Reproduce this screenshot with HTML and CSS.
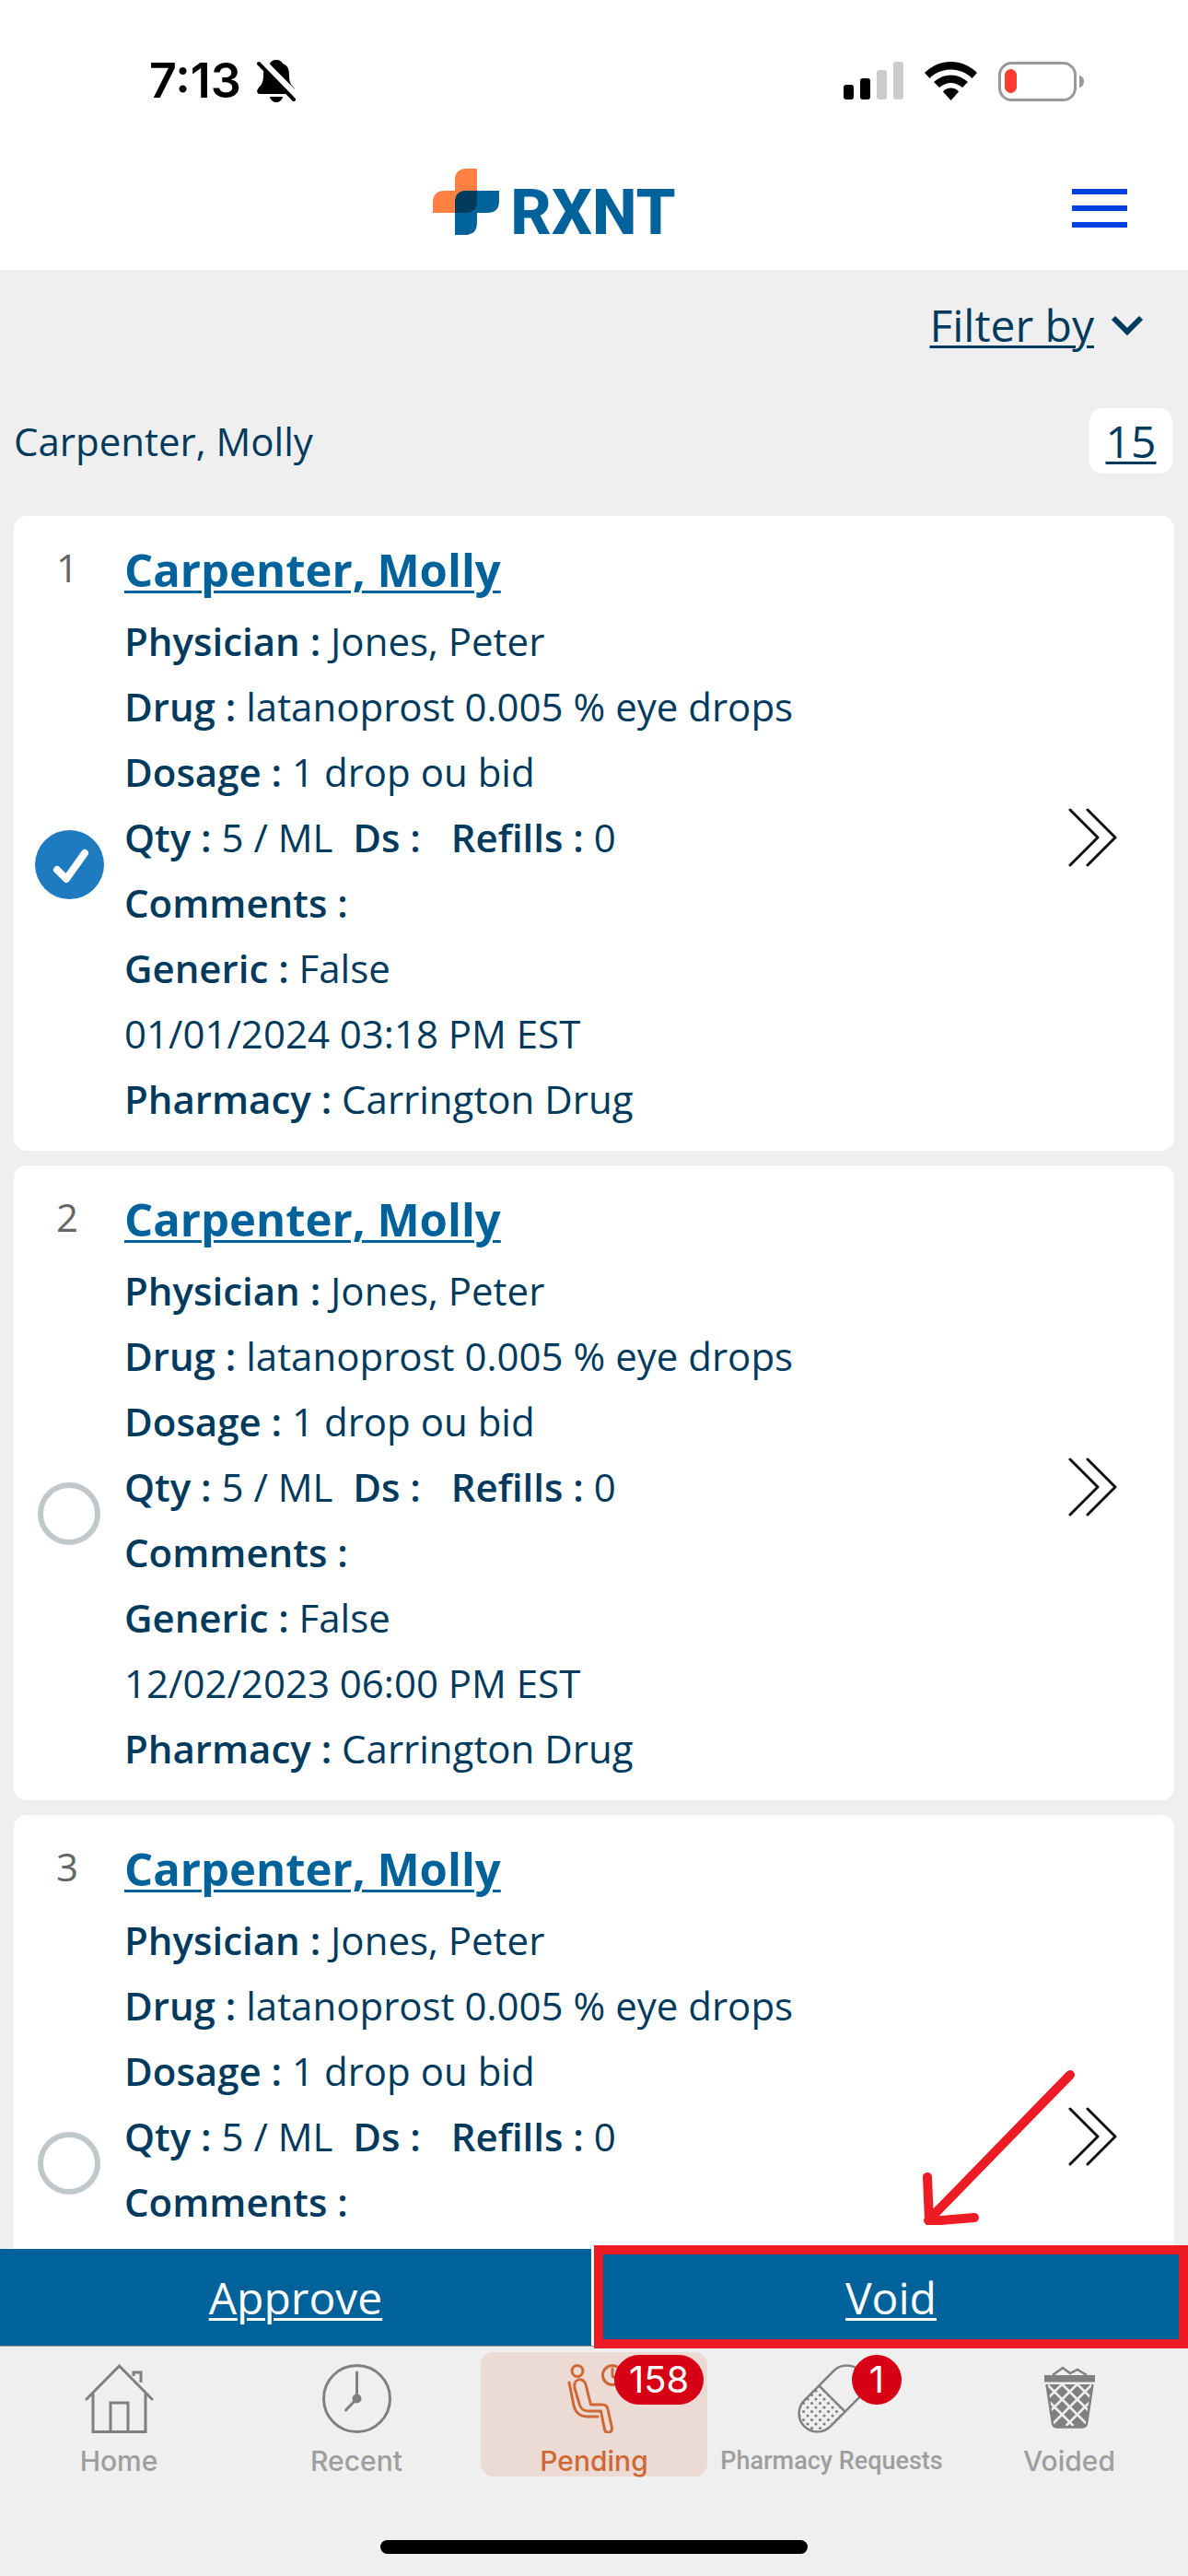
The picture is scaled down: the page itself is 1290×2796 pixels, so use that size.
FILE: index.html
```html
<!DOCTYPE html>
<html lang="en">
<head>
<meta charset="utf-8">
<meta name="viewport" content="width=device-width, initial-scale=1">
<title>RXNT – Pending prescriptions</title>
<link rel="stylesheet" href="styles.css">
</head>
<body>
<svg class="sprite" aria-hidden="true">
  <symbol id="chevrons" viewBox="0 0 53 64">
    <path d="M2 2 32 32 2 62M21 2 51 32 21 62" fill="none" stroke="#111" stroke-width="3" stroke-linecap="round" stroke-linejoin="round"/>
  </symbol>
</svg>

<div class="status">
  <div class="status-left">
    <span class="time">7:13</span>
    <svg class="bell" width="42" height="46" viewBox="0 0 42 46">
      <path d="M21 0C17 0 15 2 14 4C8 6 7 12 7 17C7 24 5 27 2 30C-1 34 0 37 3 37H39C42 37 42 33 40 30C36 26 35 23 35 17C35 11 34 6 28 4C27 2 25 0 21 0Z"/>
      <path d="M14 40H28C27 44 24 46 21 46S15 44 14 40Z"/>
      <path d="M4 1 44 41" stroke="#fff" stroke-width="9"/>
      <path d="M2 4 40 43" stroke="#000" stroke-width="4" stroke-linecap="round"/>
    </svg>
  </div>
  <div class="status-right">
    <svg width="65" height="42" viewBox="0 0 65 42">
      <rect y="25" width="11" height="16" rx="3"/>
      <rect x="18" y="18" width="11" height="23" rx="3"/>
      <rect x="36" y="9" width="11" height="32" rx="3" fill="#ccc"/>
      <rect x="54" width="11" height="41" rx="3" fill="#ccc"/>
    </svg>
    <svg width="57" height="42" viewBox="0 0 57 42">
      <path d="M28.500 0C17.500 0 7.500 4.500 0 12L5.500 18C11.500 12 19.500 8.500 28.500 8.500S45.500 12 51.500 18L57 12C49.500 4.500 39.500 0 28.500 0Z"/>
      <path d="M28.500 14.500C21.500 14.500 15 17.500 10 22L16 28C19.500 25 24 23 28.500 23S37.500 25 41 28L47 22C42 17.500 35.500 14.500 28.500 14.500Z"/>
      <path d="M28.500 28.500C25 28.500 22 30 20 32.500L28.500 42 37 32.500C35 30 32 28.500 28.500 28.500Z"/>
    </svg>
    <svg width="93" height="43" viewBox="0 0 93 43">
      <rect x="1.500" y="1.500" width="82" height="40" rx="13" fill="none" stroke="#999" stroke-width="3"/>
      <rect x="7" y="8" width="13" height="26" rx="6.500" fill="#ff3b30"/>
      <path d="M88 15C92 16 93 19 93 21.500S92 27 88 28Z" fill="#999"/>
    </svg>
  </div>
</div>

<header class="header">
  <a class="logo" href="#">
    <svg width="72" height="72" viewBox="0 0 72 72">
      <path d="M48 0V48H0V37Q0 24 13 24H24V12Q24 0 37 0Z" fill="#ff8042"/>
      <path d="M24 72V37Q24 24 37 24H72V35Q72 48 59 48H48V59Q48 72 35 72Z" fill="#00629b"/>
      <path d="M24 48V37Q24 24 37 24H48V35Q48 48 35 48Z" fill="#003a5d"/>
    </svg>
    <span>RXNT</span>
  </a>
  <button class="menu" aria-label="Menu"><i></i><i></i><i></i></button>
</header>

<main class="content">
  <div class="filter">
    <a href="#">Filter by</a>
    <svg width="36" height="22" viewBox="0 0 36 22"><path d="M3 3 18 18 33 3" fill="none" stroke="#003a5d" stroke-width="6"/></svg>
  </div>
  <div class="summary">
    <span>Carpenter, Molly</span>
    <a class="count" href="#">15</a>
  </div>

  <article class="card">
    <div class="pick"><span>1</span><input type="checkbox" aria-label="Select prescription 1" checked></div>
    <div class="details">
      <h2><a href="#">Carpenter, Molly</a></h2>
      <p><b>Physician :</b> Jones, Peter</p>
      <p><b>Drug :</b> latanoprost 0.005 % eye drops</p>
      <p><b>Dosage :</b> 1 drop ou bid</p>
      <p><b>Qty :</b> 5 / ML&nbsp; <b>Ds :</b> &nbsp; <b>Refills :</b> 0</p>
      <p><b>Comments :</b></p>
      <p><b>Generic :</b> False</p>
      <p>01/01/2024 03:18 PM EST</p>
      <p><b>Pharmacy :</b> Carrington Drug</p>
    </div>
    <a class="open" href="#" aria-label="Open prescription 1"><svg width="53" height="64"><use href="#chevrons"/></svg></a>
  </article>

  <article class="card">
    <div class="pick"><span>2</span><input type="checkbox" aria-label="Select prescription 2"></div>
    <div class="details">
      <h2><a href="#">Carpenter, Molly</a></h2>
      <p><b>Physician :</b> Jones, Peter</p>
      <p><b>Drug :</b> latanoprost 0.005 % eye drops</p>
      <p><b>Dosage :</b> 1 drop ou bid</p>
      <p><b>Qty :</b> 5 / ML&nbsp; <b>Ds :</b> &nbsp; <b>Refills :</b> 0</p>
      <p><b>Comments :</b></p>
      <p><b>Generic :</b> False</p>
      <p>12/02/2023 06:00 PM EST</p>
      <p><b>Pharmacy :</b> Carrington Drug</p>
    </div>
    <a class="open" href="#" aria-label="Open prescription 2"><svg width="53" height="64"><use href="#chevrons"/></svg></a>
  </article>

  <article class="card">
    <div class="pick"><span>3</span><input type="checkbox" aria-label="Select prescription 3"></div>
    <div class="details">
      <h2><a href="#">Carpenter, Molly</a></h2>
      <p><b>Physician :</b> Jones, Peter</p>
      <p><b>Drug :</b> latanoprost 0.005 % eye drops</p>
      <p><b>Dosage :</b> 1 drop ou bid</p>
      <p><b>Qty :</b> 5 / ML&nbsp; <b>Ds :</b> &nbsp; <b>Refills :</b> 0</p>
      <p><b>Comments :</b></p>
    </div>
    <a class="open" href="#" aria-label="Open prescription 3"><svg width="53" height="64"><use href="#chevrons"/></svg></a>
  </article>
</main>

<div class="actions">
  <button class="approve">Approve</button>
  <div class="void">
    <button>Void</button>
    <div class="callout"></div>
    <svg class="arrow" width="175" height="175" viewBox="0 0 175 175">
      <path d="M167 12 13 170M12 123 14 171 63 167" fill="none" stroke="#ed1c24" stroke-width="10" stroke-linecap="round" stroke-linejoin="round"/>
    </svg>
  </div>
</div>

<nav class="tabs">
  <a class="tab" href="#">
    <svg width="75" height="75" viewBox="0 0 75 75" fill="none" stroke="#808080" stroke-width="3">
      <path d="M1 39 37.500 2 74 39M9 32V73.500H66V32M28 73V42H47V73M53 13V9H61V20"/>
    </svg>
    <span>Home</span>
  </a>
  <a class="tab" href="#">
    <svg width="75" height="75" viewBox="0 0 75 75" fill="none" stroke="#808080" stroke-width="3" stroke-linecap="round">
      <circle cx="37.500" cy="37.500" r="36"/><path d="M37.500 9V37.500L25.500 50"/><circle cx="37.500" cy="37.500" r="3.500" fill="#808080"/>
    </svg>
    <span>Recent</span>
  </a>
  <a class="tab active" href="#" aria-current="page">
    <svg width="75" height="75" viewBox="0 0 75 75" fill="none" stroke="#cf6835" stroke-width="3" stroke-linecap="round" stroke-linejoin="round">
      <circle cx="19" cy="7.500" r="6"/>
      <circle cx="57" cy="12" r="10.500"/><path d="M57 5V13L61 16"/>
      <path d="M10 20 15 45Q18 57 30 57H41"/>
      <path d="M16 26C14 15 26 14 28 22L33.500 44H46Q51 44 52 49L56.500 69C57 75 50 76 48.500 71L44.500 51H31Q23 51 21 43Z"/>
    </svg>
    <span>Pending</span>
    <em class="badge">158</em>
  </a>
  <a class="tab" href="#">
    <svg width="75" height="75" viewBox="0 0 75 75">
      <defs><pattern id="dots" width="9" height="9" patternUnits="userSpaceOnUse"><circle cx="2" cy="2" r="1.600" fill="#808080"/><circle cx="6.500" cy="6.500" r="1.600" fill="#808080"/></pattern></defs>
      <path d="M23 23 51 51 35 67A19.500 19.500 0 0 1 7 39Z" fill="url(#dots)"/>
      <g transform="rotate(-45 37.500 37.500)" fill="none" stroke="#808080" stroke-width="2.500">
        <rect x="-5" y="17.500" width="85" height="40" rx="20"/><path d="M37.500 17.500V57.500"/>
      </g>
    </svg>
    <span class="long">Pharmacy Requests</span>
    <em class="badge">1</em>
  </a>
  <a class="tab" href="#">
    <svg width="75" height="75" viewBox="0 0 75 75">
      <path d="M19 12 30 4 38 10 46 6 56 12" fill="none" stroke="#808080" stroke-width="2.500"/>
      <rect x="10" y="12" width="55" height="7.500" fill="#808080"/>
      <path d="M12 22H63L56 65Q55 69 51 69H24Q20 69 19 65Z" fill="#808080"/>
      <path d="M13 22 56 65M29.500 22 62 54.500M46 22 62 38M16 41.500 41.500 67M62 22 19 65M45.500 22 13 54.500M29 22 13 38M59 41.500 33.500 67" stroke="#efefef" stroke-width="2.500"/>
      <path d="M12.500 22 19 65Q20 68.500 24 68.500H51Q55 68.500 56 65L62.500 22" fill="none" stroke="#808080" stroke-width="2.500"/>
    </svg>
    <span>Voided</span>
  </a>
</nav>
<div class="home-indicator"></div>
</body>
</html>
```
FILE: styles.css
```css
* { box-sizing: border-box; }

body {
  margin: 0;
  height: 100vh;
  display: flex;
  flex-direction: column;
  background: #efefef;
  color: #003a5d;
  font: 42px/71px "Open Sans", "Noto Sans", sans-serif;
}

button { border: 0; padding: 0; font: inherit; cursor: pointer; }
svg { display: block; flex: none; }
.sprite { position: absolute; width: 0; height: 0; }

/* Status bar */
.status {
  flex: none;
  display: flex;
  justify-content: space-between;
  align-items: center;
  padding: 57px 113px 21px 162px;
  background: #fff;
  color: #000;
}
.status-left { display: flex; align-items: center; gap: 17px; }
.status-right { display: flex; align-items: center; gap: 23px; }
.time { font: 600 52px/62px Inter, sans-serif; }

/* Header */
.header {
  flex: none;
  display: grid;
  grid-template-columns: 1fr auto 1fr;
  align-items: center;
  height: 153px;
  padding: 5px 66px 0 0;
  background: #fff;
}
.logo {
  grid-column: 2;
  display: flex;
  align-items: end;
  gap: 12px;
  margin-left: -20px;
  color: #00629b;
  text-decoration: none;
}
.logo span { font: 800 69px/48px Roboto, sans-serif; }
.menu {
  justify-self: end;
  display: flex;
  flex-direction: column;
  gap: 12px;
  width: 60px;
  margin-top: 14px;
  background: none;
}
.menu i { height: 6px; background: #0040e0; }

/* List */
.content {
  flex: 1;
  min-height: 0;
  display: flex;
  flex-direction: column;
  gap: 16px;
  padding: 0 15px;
  overflow: hidden;
}
.filter, .summary { flex: none; display: flex; align-items: center; }
.filter {
  justify-content: flex-end;
  gap: 18px;
  height: 117px;
  padding: 2px 33px 0 0;
  font-size: 48px;
}
.filter a, .count { color: inherit; text-decoration-thickness: 3px; text-underline-offset: 4px; }
.summary { justify-content: space-between; height: 104px; margin-bottom: 14px; }
.count {
  min-width: 90px;
  margin-right: 2px;
  border-radius: 14px;
  background: #fff;
  font-size: 48px;
  text-align: center;
}

.card {
  flex: none;
  display: flex;
  min-height: 689px;
  padding: 16px 60px 21px 0;
  border-radius: 14px;
  background: #fff;
}
.pick {
  display: flex;
  flex-direction: column;
  align-items: center;
  width: 120px;
  padding-bottom: 8px;
}
.pick span { margin-right: 4px; color: #666; line-height: 80px; }
.pick input {
  appearance: none;
  width: 68px;
  height: 68px;
  margin: auto 0;
  border: 6px solid #c1c8cc;
  border-radius: 50%;
}
.pick input:checked {
  width: 75px;
  height: 75px;
  border: 0;
  background: #1f7bbf url("data:image/svg+xml,%3Csvg xmlns='http://www.w3.org/2000/svg' viewBox='0 0 75 75'%3E%3Cpath d='M24 43 34 53 54 25' fill='none' stroke='white' stroke-width='8' stroke-linecap='round' stroke-linejoin='round'/%3E%3C/svg%3E") center / 75px;
}
.details { flex: 1; }
.details h2 { margin: 0; font-size: 49px; font-weight: 700; line-height: 84px; }
.details h2 a { color: #00629b; text-decoration-thickness: 3px; text-underline-offset: 4px; }
.details p { margin: 0; }
.details b { font-weight: 600; }
.open { align-self: center; margin-top: 14px; padding: 2px; }

/* Approve / Void */
.actions {
  flex: none;
  display: grid;
  grid-template-columns: 1fr 1fr;
  border-bottom: 1px solid #999;
}
.actions button {
  height: 105px;
  background: #00629b;
  color: #fff;
  font-size: 48px;
  text-decoration: underline;
  text-decoration-thickness: 3px;
  text-underline-offset: 4px;
}
.actions .approve { border-right: 3px solid #fff; }
.void { position: relative; display: grid; }
.callout {
  position: absolute;
  inset: -4px 0 -3px;
  border: 10px solid #ed1c24;
  pointer-events: none;
}
.arrow { position: absolute; right: 120px; bottom: calc(100% + 26px); pointer-events: none; }

/* Tab bar */
.tabs {
  flex: none;
  display: grid;
  grid-template-columns: repeat(5, 1fr);
  padding-top: 6px;
  font: 500 30px/34px Inter, sans-serif;
}
.tab {
  position: relative;
  display: flex;
  flex-direction: column;
  align-items: center;
  gap: 13px;
  margin: 0 6px;
  padding-top: 13px;
  border-radius: 14px;
  color: #9e9e9e;
  text-decoration: none;
}
.tab.active { background: #ebdbd4; color: #cf6835; }
.long { font-family: Roboto, sans-serif; font-size: 27px; white-space: nowrap; }
.badge {
  position: absolute;
  top: 3px;
  left: calc(50% + 22px);
  min-width: 54px;
  padding: 0 16px;
  border-radius: 27px;
  background: #d80014;
  color: #fff;
  font: 400 40px/54px Inter, sans-serif;
  text-align: center;
}
.home-indicator {
  flex: none;
  align-self: center;
  width: 36%;
  height: 15px;
  margin: 69px 0 24px;
  border-radius: 8px;
  background: #000;
}
```
